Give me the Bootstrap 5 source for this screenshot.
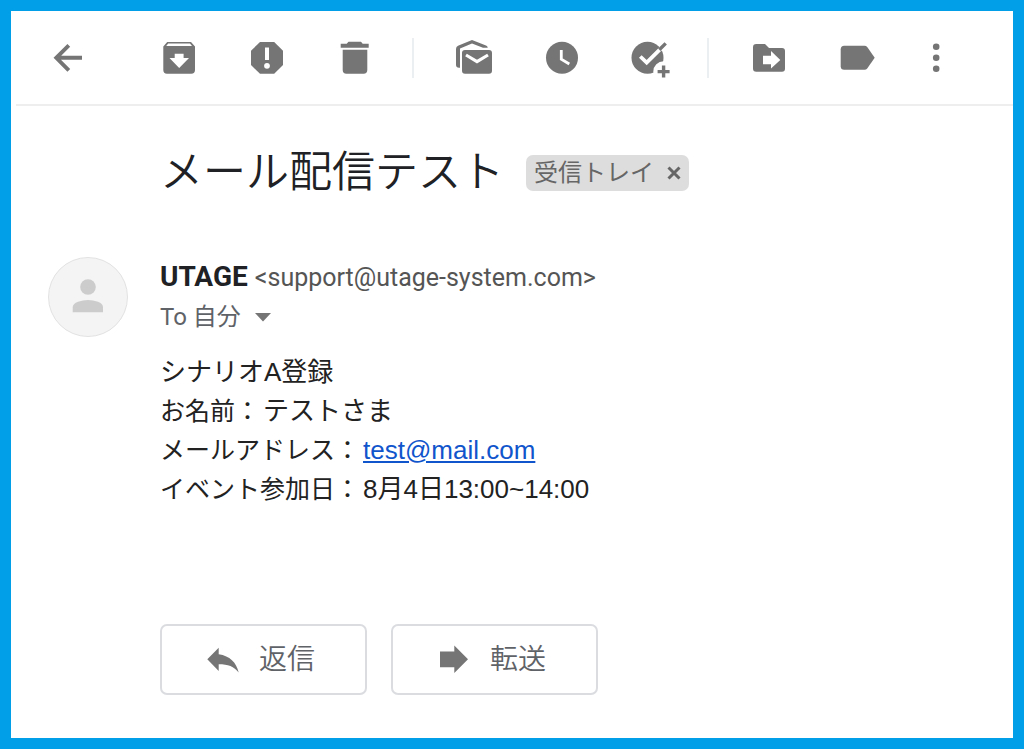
<!DOCTYPE html>
<html lang="ja">
<head>
<meta charset="utf-8">
<meta name="viewport" content="width=device-width, initial-scale=1">
<title>メール配信テスト</title>
<link href="https://cdn.jsdelivr.net/npm/bootstrap@5.3.0/dist/css/bootstrap.min.css" rel="stylesheet">
<style>
  body { font-family: Roboto, "Noto Sans CJK JP", sans-serif; color: #202124; background: #fff; }
  .mail-frame { border: 11px solid #009fe8; }
  .toolbar { margin-left: 5px; padding: 25px 0 24px 30px; gap: 75px; border-bottom: 2px solid #eee; }
  .tool-group { gap: 44px; }
  .tool-group.divided { position: relative; }
  .tool-group.divided::before { content: ""; position: absolute; left: -40px; top: 2px; width: 2px; height: 40px; background: #eceff1; }
  .back-btn { margin-right: -8px; }
  .more-btn { margin-left: -9px; }
  .icon-btn { width: 44px; height: 44px; color: #757575; line-height: 0; }
  .glyph { width: 44px; height: 44px; fill: currentColor; flex: none; }
  .subject-row { padding: 34px 20px 0 149px; gap: 22px; }
  .subject { font-size: 43px; line-height: 64px; font-weight: 350; }
  .inbox-tag { background: #ddd; color: #666; font-size: 24px; line-height: 36px; border-radius: 7px; padding: 0 8px; gap: 13px; margin-top: 2px; }
  .tag-close { width: 14px; line-height: 0; color: #666; }
  .message { display: grid; grid-template-columns: 112px 1fr; padding: 49px 20px 43px 37px; }
  .avatar { width: 80px; height: 80px; margin-top: 4px; }
  .sender { font-size: 28px; line-height: 40px; gap: 7px; margin-top: 4px; }
  .address { font-size: 25px; color: #555; }
  .recipient { font-size: 24px; line-height: 38px; color: #5f6368; gap: 14px; }
  .mail-text { font-family: "Liberation Sans", "Noto Sans CJK JP", sans-serif; font-size: 26px; line-height: 39px; color: #222; margin: 17px 0 115px; }
  .field-name { font-size: 25px; padding-right: 3px; }
  .mail-text a { color: #1155cc; }
  .reply-btn { width: 207px; height: 71px; border: 2px solid #dadce0; border-radius: 7px; color: #5f6368; font-size: 28px; font-weight: 350; padding: 0 0 0 39px; gap: 14px; }
  .reply-btn .glyph { color: #757575; }
</style>
</head>
<body>
<div class="mail-frame min-vh-100">
  <header class="toolbar d-flex">
    <div class="tool-group d-flex back-btn">
      <button class="btn p-0 border-0 icon-btn" type="button" aria-label="戻る"><svg class="glyph" viewBox="0 0 44 44"><path d="M22.8 9.3 10.3 21.8 22.8 34.3M10.3 21.8H36" fill="none" stroke="currentColor" stroke-width="3.9"/></svg></button>
    </div>
    <div class="tool-group d-flex">
      <button class="btn p-0 border-0 icon-btn" type="button" aria-label="アーカイブ"><svg class="glyph" viewBox="0 0 44 44"><path fill-rule="evenodd" d="M10.2 6H34L38 10.5V34Q38 37.7 34.3 37.7H10Q6.3 37.7 6.3 34V10.5ZM11.2 7.6 9.2 10H35L33 7.6ZM17.7 17.7V22H12.5L22.2 32 32 22H26.6V17.7Z"/></svg></button>
      <button class="btn p-0 border-0 icon-btn" type="button" aria-label="迷惑メールを報告"><svg class="glyph" viewBox="0 0 44 44"><path d="M15 6H29.2L38 14.8V29L29.2 37.8H15L6 29V14.8Z"/><path fill="#fff" d="M20 11.5h4V24h-4z"/><circle cx="22" cy="29.8" r="2.9" fill="#fff"/></svg></button>
      <button class="btn p-0 border-0 icon-btn" type="button" aria-label="削除"><svg class="glyph" viewBox="0 0 44 44"><path d="M13.7 7.7 15.5 5.7H28L29.7 7.7H35.7V11.8H7.7V7.7ZM9.7 13.7H34.3V34Q34.3 37.7 30.6 37.7H13.4Q9.7 37.7 9.7 34Z"/></svg></button>
    </div>
    <div class="tool-group d-flex divided">
      <button class="btn p-0 border-0 icon-btn" type="button" aria-label="未読にする"><svg class="glyph" viewBox="0 0 44 44"><path d="M4 13Q4 10.5 6 9.7L20 4 34 9.6Q35.5 10.2 35.8 11.8H31L20 7.6 8 12.5V31.8H7Q4 31.5 4 29ZM13 14H37Q40 14 40 17V34.7Q40 37.7 37 37.7H13Q10 37.7 10 34.7V17Q10 14 13 14Z"/><path d="M14 19 25 25.6 36 19" fill="none" stroke="#fff" stroke-width="3.2"/></svg></button>
      <button class="btn p-0 border-0 icon-btn" type="button" aria-label="スヌーズ"><svg class="glyph" viewBox="0 0 44 44"><circle cx="22" cy="21.8" r="16"/><path d="M21.3 14V23.2L29.3 28" fill="none" stroke="#fff" stroke-width="2.8"/></svg></button>
      <button class="btn p-0 border-0 icon-btn" type="button" aria-label="ToDo リストに追加"><svg class="glyph" viewBox="0 0 44 44"><circle cx="19.5" cy="21.8" r="16"/><circle cx="35.6" cy="35.6" r="10.3" fill="#fff"/><path d="M12.3 20.5 18.7 26.7 35 10.4" fill="none" stroke="#fff" stroke-width="3.8"/><path d="M31.3 13.8 37.7 7.4M35.6 29.6V41.6M29.6 35.6H41.6" fill="none" stroke="currentColor" stroke-width="3.4"/></svg></button>
    </div>
    <div class="tool-group d-flex divided">
      <button class="btn p-0 border-0 icon-btn" type="button" aria-label="移動"><svg class="glyph" viewBox="0 0 44 44"><path fill-rule="evenodd" d="M9.3 8H18L22 12H35Q38 12 38 15V32.7Q38 35.7 35 35.7H9.3Q6 35.7 6 32.5V11.3Q6 8 9.3 8ZM16 19.7V28.2H24V32.5L33.3 24 24 15V19.7Z"/></svg></button>
      <button class="btn p-0 border-0 icon-btn" type="button" aria-label="ラベル"><svg class="glyph" viewBox="0 0 44 44"><path d="M9.2 9.7H29.5Q31.2 9.7 32.2 11L39.7 21.7 32.2 32.4Q31.2 33.7 29.5 33.7H9.2Q5.7 33.7 5.7 30.2V13.2Q5.7 9.7 9.2 9.7Z"/></svg></button>
      <button class="btn p-0 border-0 icon-btn more-btn" type="button" aria-label="その他"><svg class="glyph" viewBox="0 0 44 44"><circle cx="22.2" cy="10.8" r="3.3"/><circle cx="22.2" cy="21.8" r="3.3"/><circle cx="22.2" cy="32.8" r="3.3"/></svg></button>
    </div>
  </header>

  <main>
    <div class="subject-row d-flex align-items-center">
      <h1 class="subject m-0">メール配信テスト</h1>
      <div class="inbox-tag d-flex align-items-center">受信トレイ
        <button class="btn p-0 border-0 tag-close" type="button" aria-label="受信トレイのラベルを外す"><svg width="14" height="14" viewBox="0 0 14 14"><path d="M1.5 1.5 12.5 12.5M12.5 1.5 1.5 12.5" stroke="currentColor" stroke-width="3"/></svg></button>
      </div>
    </div>

    <article class="message">
      <svg class="avatar" viewBox="0 0 80 80"><circle cx="40" cy="40" r="39.5" fill="#f4f4f4" stroke="#e2e2e2"/><circle cx="40" cy="30" r="7.8" fill="#ccc"/><path d="M24.7 55.2V50Q25 46.8 30 44.7Q40 41.3 50 44.7Q54.8 46.8 55 50V55.2Z" fill="#ccc"/></svg>
      <div>
        <div class="sender d-flex align-items-baseline"><strong>UTAGE</strong><span class="address">&lt;support@utage-system.com&gt;</span></div>
        <button class="btn p-0 border-0 recipient d-flex align-items-center" type="button">To 自分<svg width="16" height="9" viewBox="0 0 16 9"><path d="M0 0H16L8 8.5Z" fill="#757575"/></svg></button>
        <div class="mail-text">
          <div>シナリオA登録</div>
          <div><span class="field-name">お名前：</span>テストさま</div>
          <div><span class="field-name">メールアドレス：</span><a href="mailto:test@mail.com">test@mail.com</a></div>
          <div><span class="field-name">イベント参加日：</span>8月4日13:00~14:00</div>
        </div>
        <div class="d-flex flex-wrap gap-4">
          <button class="btn reply-btn d-flex align-items-center" type="button"><svg class="glyph" viewBox="0 0 44 44"><path d="M6.3 21.3 17.7 9.7V16.2C29 18 35 24 37.7 34.5 33 28.5 27 26.3 17.7 26.3V33Z"/></svg>返信</button>
          <button class="btn reply-btn d-flex align-items-center" type="button"><svg class="glyph" viewBox="0 0 44 44"><path d="M8 13.4H22.3V7.4L36 21.3 22.3 35V29.3H8Z"/></svg>転送</button>
        </div>
      </div>
    </article>
  </main>
</div>
<script src="https://cdn.jsdelivr.net/npm/bootstrap@5.3.0/dist/js/bootstrap.bundle.min.js"></script>
</body>
</html>
